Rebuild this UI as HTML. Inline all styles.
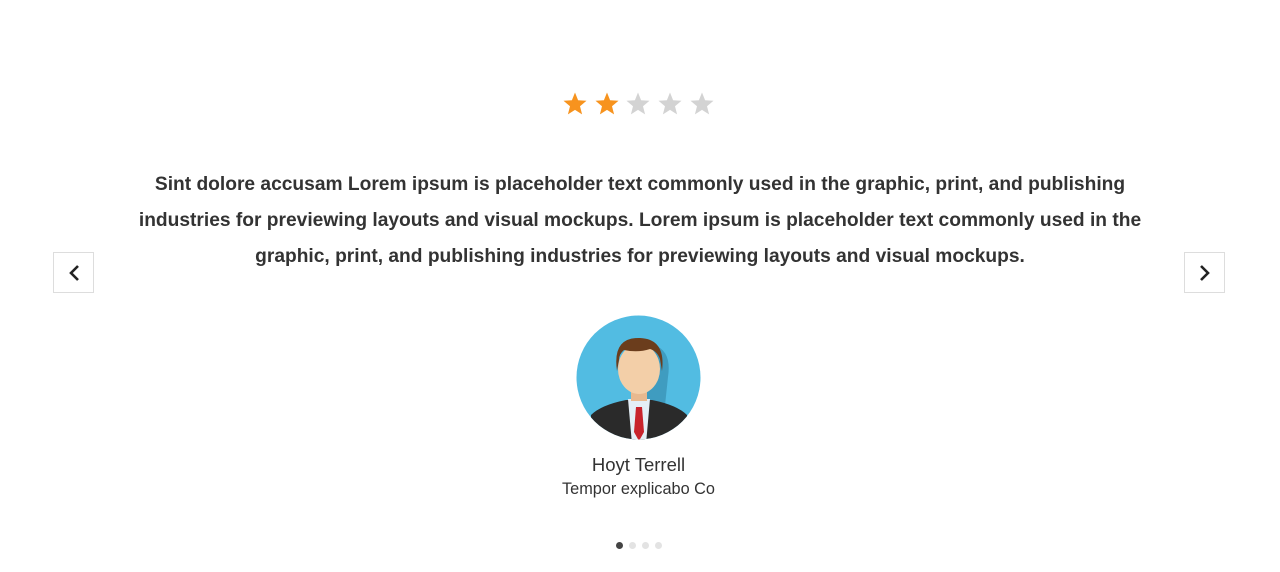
<!DOCTYPE html>
<html><head><style>
body{margin:0;width:1280px;height:572px;background:#fff;font-family:"Liberation Sans",sans-serif;position:relative;overflow:hidden}
.abs{position:absolute}
.stars{left:562px;top:91px;display:flex}
.txt{left:0;width:1280px;top:167px;text-align:center;font-weight:bold;font-size:19.2px;line-height:36px;color:#333}
.btn{width:39px;height:39px;border:1px solid #ddd;top:252px;background:#fff}
.name{left:0;width:1277px;text-align:center;top:454px;font-size:18.5px;color:#333}
.co{left:0;width:1277px;text-align:center;top:480px;font-size:16.3px;color:#333}
.dot{width:7px;height:7px;border-radius:50%;background:#e3e3e3;top:542px}
</style></head><body>
<div class="abs stars">
<svg width="160" height="28" viewBox="0 0 160 28">
<defs><path id="s" d="M13 1.5l3.1 7.8 8.4.5-6.5 5.4 2.1 8.2L13 18.9 5.9 23.4 8 15.2 1.5 9.8l8.4-.5z"/></defs>
<use href="#s" x="0" fill="#f7931e"/>
<use href="#s" x="32" fill="#f7931e"/>
<use href="#s" x="63" fill="#d3d3d3"/>
<use href="#s" x="95" fill="#d3d3d3"/>
<use href="#s" x="127" fill="#d3d3d3"/>
</svg></div>
<div class="abs txt">Sint dolore accusam Lorem ipsum is placeholder text commonly used in the graphic, print, and publishing<br>industries for previewing layouts and visual mockups. Lorem ipsum is placeholder text commonly used in the<br>graphic, print, and publishing industries for previewing layouts and visual mockups.</div>
<div class="abs btn" style="left:53px"><svg width="39" height="39"><path d="M24 13l-7 7 7 7" fill="none" stroke="#222" stroke-width="2.6"/></svg></div>
<div class="abs btn" style="left:1184px"><svg width="39" height="39"><path d="M16 13l7 7-7 7" fill="none" stroke="#222" stroke-width="2.6"/></svg></div>
<svg class="abs" style="left:576px;top:315px" width="125" height="125" viewBox="0 0 125 125">
<defs><clipPath id="c"><circle cx="62.5" cy="62.5" r="62"/></clipPath></defs>
<circle cx="62.5" cy="62.5" r="62" fill="#52bce2"/>
<g clip-path="url(#c)">
<path d="M78 30q18 6 14 32l-4 38-22 0z" fill="#3f9cc0"/>
<path d="M15 100q10-10 35-15h26q25 5 35 15v30H15z" fill="#2a2a2a"/>
<path d="M52 84h22l-4 45h-14z" fill="#e4eef6"/>
<path d="M60 92h6l2 25-5 9-5-9z" fill="#c8232c"/>
<rect x="55" y="68" width="16" height="18" fill="#e8b98f"/>
<ellipse cx="63" cy="54" rx="21" ry="25" fill="#f3cfa8"/>
<path d="M41 56q-5-34 23-33q26 1 22 33l-2-12q-3-8-10-10q-12 4-26 1q-5 4-5 10z" fill="#6b3d1c"/>
</g></svg>
<div class="abs name">Hoyt Terrell</div>
<div class="abs co">Tempor explicabo Co</div>
<div class="abs dot" style="left:616px;background:#444"></div>
<div class="abs dot" style="left:629px"></div>
<div class="abs dot" style="left:642px"></div>
<div class="abs dot" style="left:655px"></div>
</body></html>
